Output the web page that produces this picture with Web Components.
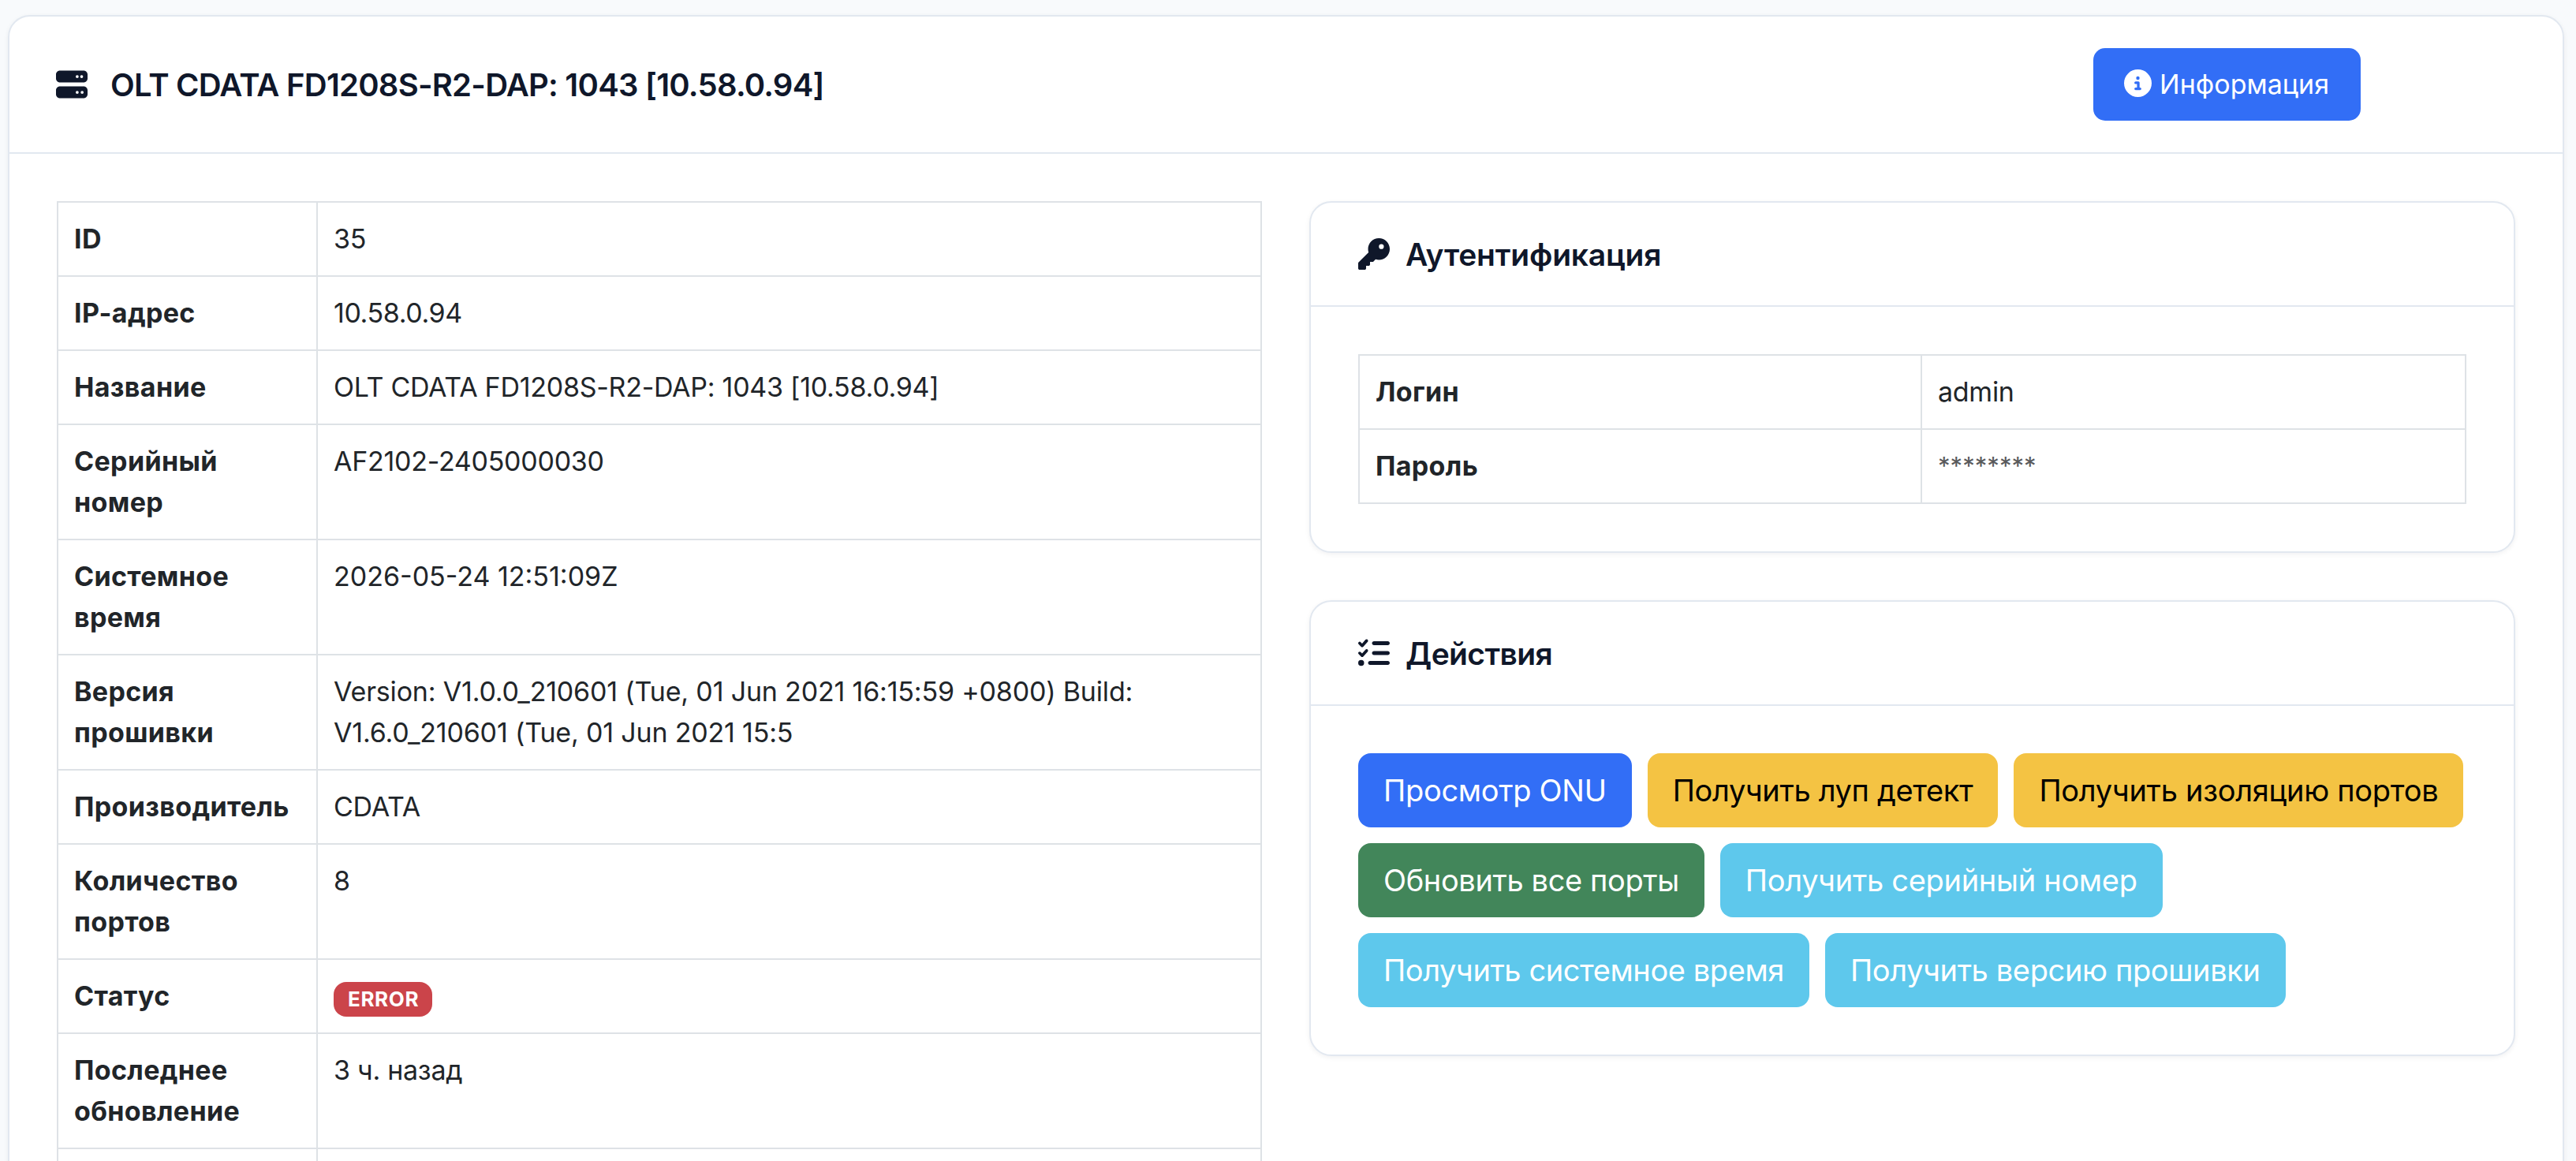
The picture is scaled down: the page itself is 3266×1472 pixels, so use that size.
<!DOCTYPE html>
<html lang="ru">
<head>
    <meta charset="utf-8">
    <title>OLT CDATA FD1208S-R2-DAP: 1043 [10.58.0.94]</title>
    <style>
        html, body {
            height: 1472px;
            overflow: hidden;
        }

        body {
            margin: 0;
            padding: 19px 15px 0 10px;
            box-sizing: border-box;
            background: #f8fafc;
            color: #212529;
            font: 400 34px/52px Inter, "Noto Sans", sans-serif;
        }

        .columns {
            display: grid;
            grid-template-columns: 1528px 1529px;
            gap: 60px;
            align-items: start;
        }

        .side {
            display: flex;
            flex-direction: column;
            gap: 60px;
        }

        .actions {
            display: flex;
            flex-wrap: wrap;
            gap: 20px;
        }
    </style>
</head>
<body>
    <panel-card class="page" icon="server" heading="OLT CDATA FD1208S-R2-DAP: 1043 [10.58.0.94]" size="large">
        <action-button slot="tools" kind="primary" icon="info">Информация</action-button>

        <div class="columns">
            <detail-table style="--label-width: 329px">
                <detail-row label="ID">35</detail-row>
                <detail-row label="IP-адрес" style="letter-spacing: -.4px">10.58.0.94</detail-row>
                <detail-row label="Название">OLT CDATA FD1208S-R2-DAP: 1043 [10.58.0.94]</detail-row>
                <detail-row label="Серийный номер">AF2102-2405000030</detail-row>
                <detail-row label="Системное время" style="letter-spacing: 0">2026-05-24 12:51:09Z</detail-row>
                <detail-row label="Версия прошивки" style="letter-spacing: -.18px">Version: V1.0.0_210601 (Tue, 01 Jun 2021 16:15:59 +0800) Build: V1.6.0_210601 (Tue, 01 Jun 2021 15:5</detail-row>
                <detail-row label="Производитель">CDATA</detail-row>
                <detail-row label="Количество портов">8</detail-row>
                <detail-row label="Статус"><status-badge>ERROR</status-badge></detail-row>
                <detail-row label="Последнее обновление">3 ч. назад</detail-row>
                <detail-row label=""></detail-row>
            </detail-table>

            <div class="side">
                <panel-card icon="key" heading="Аутентификация">
                    <detail-table style="--label-width: 713px">
                        <detail-row label="Логин">admin</detail-row>
                        <detail-row label="Пароль"><masked-text>********</masked-text></detail-row>
                    </detail-table>
                </panel-card>

                <panel-card icon="tasks" heading="Действия" style="--heading-spacing: -.6px">
                    <div class="actions">
                        <action-button kind="primary" size="large" style="letter-spacing: -.3px">Просмотр ONU</action-button>
                        <action-button kind="warning" size="large" style="letter-spacing: -.35px">Получить луп детект</action-button>
                        <action-button kind="warning" size="large" style="letter-spacing: -.28px">Получить изоляцию портов</action-button>
                        <action-button kind="success" size="large" style="letter-spacing: -.38px">Обновить все порты</action-button>
                        <action-button kind="info" size="large" style="letter-spacing: -.3px">Получить серийный номер</action-button>
                        <action-button kind="info" size="large" style="letter-spacing: -.41px">Получить системное время</action-button>
                        <action-button kind="info" size="large" style="letter-spacing: -.37px">Получить версию прошивки</action-button>
                    </div>
                </panel-card>
            </div>
        </div>
    </panel-card>

    <script>
        const icons = {
            server: 'M64 32C28.7 32 0 60.7 0 96v64c0 35.3 28.7 64 64 64H448c35.3 0 64-28.7 64-64V96c0-35.3-28.7-64-64-64H64zm280 72a24 24 0 1 1 0 48 24 24 0 1 1 0-48zm48 24a24 24 0 1 1 48 0 24 24 0 1 1-48 0zM64 288c-35.3 0-64 28.7-64 64v64c0 35.3 28.7 64 64 64H448c35.3 0 64-28.7 64-64V352c0-35.3-28.7-64-64-64H64zm280 72a24 24 0 1 1 0 48 24 24 0 1 1 0-48zm56 24a24 24 0 1 1 48 0 24 24 0 1 1-48 0z',
            key: 'M336 352c97.2 0 176-78.8 176-176S433.2 0 336 0S160 78.8 160 176c0 18.7 2.9 36.8 8.3 53.7L7 391c-4.5 4.5-7 10.6-7 17v80c0 13.3 10.7 24 24 24h80c13.3 0 24-10.7 24-24V448h40c13.3 0 24-10.7 24-24V384h40c6.4 0 12.5-2.5 17-7l33.3-33.3c16.9 5.4 35 8.3 53.7 8.3zM376 96a40 40 0 1 1 0 80 40 40 0 1 1 0-80z',
            tasks: 'M152.1 38.2c9.9 8.9 10.7 24 1.8 33.9l-72 80c-4.4 4.9-10.6 7.8-17.2 7.9s-12.9-2.4-17.6-7L7 113C-2.3 103.6-2.3 88.4 7 79s24.6-9.4 33.9 0l22.1 22.1 55.1-61.2c8.9-9.9 24-10.7 33.9-1.8zm0 160c9.9 8.9 10.7 24 1.8 33.9l-72 80c-4.4 4.9-10.6 7.8-17.2 7.9s-12.9-2.4-17.6-7L7 273c-9.4-9.4-9.4-24.6 0-33.9s24.6-9.4 33.9 0l22.1 22.1 55.1-61.2c8.9-9.9 24-10.7 33.9-1.8zM224 96c0-17.7 14.3-32 32-32H480c17.7 0 32 14.3 32 32s-14.3 32-32 32H256c-17.7 0-32-14.3-32-32zm0 160c0-17.7 14.3-32 32-32H480c17.7 0 32 14.3 32 32s-14.3 32-32 32H256c-17.7 0-32-14.3-32-32zM160 416c0-17.7 14.3-32 32-32H480c17.7 0 32 14.3 32 32s-14.3 32-32 32H192c-17.7 0-32-14.3-32-32zM48 368a48 48 0 1 1 0 96 48 48 0 1 1 0-96z',
            info: 'M256 512A256 256 0 1 0 256 0a256 256 0 1 0 0 512zM216 336h24V272H216c-13.3 0-24-10.7-24-24s10.7-24 24-24h48c13.3 0 24 10.7 24 24v88h8c13.3 0 24 10.7 24 24s-10.7 24-24 24H216c-13.3 0-24-10.7-24-24s10.7-24 24-24zm40-208a32 32 0 1 1 0 64 32 32 0 1 1 0-64z'
        };

        class BaseElement extends HTMLElement {
            connectedCallback() {
                if (!this.shadowRoot) {
                    this.attachShadow({mode: 'open'}).innerHTML = this.template;
                }
            }
        }

        class SolidIcon extends BaseElement {
            get template() {
                return `
                    <style>
                        :host {
                            display: block;
                            flex: none;
                            width: 40px;
                            height: 40px;
                        }

                        svg {
                            display: block;
                            width: 100%;
                            height: 100%;
                            fill: currentColor;
                        }
                    </style>

                    <svg viewBox="0 0 512 512"><path d="${icons[this.getAttribute('name')]}"/></svg>
                `;
            }
        }

        class PanelCard extends BaseElement {
            get template() {
                return `
                    <style>
                        :host {
                            display: block;
                            border: 2px solid #e2e8f0;
                            border-radius: 28px;
                            background: #fff;
                            box-shadow: 0 2px 6px rgba(15, 23, 42, .06);
                        }

                        header {
                            display: flex;
                            align-items: center;
                            justify-content: space-between;
                            height: 130px;
                            padding: 0 60px;
                            border-bottom: 2px solid #e2e8f0;
                            color: #0f172a;
                        }

                        h2 {
                            display: flex;
                            align-items: center;
                            gap: 20px;
                            margin: 0;
                            font-size: 39px;
                            font-weight: 600;
                            letter-spacing: var(--heading-spacing, -.2px);
                        }

                        h2 span {
                            padding-top: 1px;
                        }

                        .body {
                            padding: 60px;
                        }

                        :host([size="large"]) header {
                            height: 172px;
                            padding: 0 256px 0 59px;
                        }

                        :host([size="large"]) h2 {
                            gap: 29px;
                            font-size: 40px;
                            letter-spacing: -.76px;
                        }
                    </style>

                    <header>
                        <h2><solid-icon name="${this.getAttribute('icon')}"></solid-icon><span>${this.getAttribute('heading')}</span></h2>
                        <slot name="tools"></slot>
                    </header>
                    <div class="body"><slot></slot></div>
                `;
            }
        }

        class DetailTable extends BaseElement {
            get template() {
                return `
                    <style>
                        :host {
                            display: block;
                            border: 2px solid #dee2e6;
                            border-bottom: 0;
                        }
                    </style>

                    <slot></slot>
                `;
            }
        }

        class DetailRow extends BaseElement {
            get template() {
                return `
                    <style>
                        :host {
                            display: grid;
                            grid-template-columns: var(--label-width) 1fr;
                            border-bottom: 2px solid #dee2e6;
                            letter-spacing: -.27px;
                        }

                        div {
                            min-height: 52px;
                            padding: 20px;
                        }

                        .label {
                            border-right: 2px solid #dee2e6;
                            font-weight: 700;
                            letter-spacing: .35px;
                        }
                    </style>

                    <div class="label">${this.getAttribute('label')}</div>
                    <div><slot></slot></div>
                `;
            }
        }

        class StatusBadge extends BaseElement {
            get template() {
                return `
                    <style>
                        :host {
                            display: block;
                            width: fit-content;
                            margin-top: 8px;
                            padding: 0 17px 0 18px;
                            border-radius: 16px;
                            background: #cb444a;
                            color: #fff;
                            font-size: 26px;
                            font-weight: 700;
                            line-height: 44px;
                            letter-spacing: .6px;
                        }
                    </style>

                    <slot></slot>
                `;
            }
        }

        class MaskedText extends BaseElement {
            get template() {
                return `
                    <style>
                        :host {
                            display: block;
                            color: #58595b;
                            font-size: 31px;
                            letter-spacing: .05px;
                        }
                    </style>

                    <slot></slot>
                `;
            }
        }

        class ActionButton extends BaseElement {
            get template() {
                const colors = {
                    primary: ['#326ef6', '#fff'],
                    warning: ['#f4c343', '#000'],
                    success: ['#42865a', '#fff'],
                    info: ['#5ec8ec', '#fff']
                };
                const [background, color] = colors[this.getAttribute('kind')];
                const icon = this.getAttribute('icon');

                return `
                    <style>
                        :host {
                            display: block;
                        }

                        button {
                            display: flex;
                            align-items: center;
                            gap: 10px;
                            height: 92px;
                            padding: 0 40px 0 39px;
                            border: 0;
                            border-radius: 15px;
                            background: ${background};
                            color: ${color};
                            font: inherit;
                            letter-spacing: inherit;
                            white-space: nowrap;
                        }

                        :host([size="large"]) button {
                            height: 94px;
                            padding: 0 32px;
                            border-radius: 16px;
                            font-size: 38px;
                        }

                        solid-icon {
                            width: 35px;
                            height: 35px;
                            margin-bottom: 3px;
                        }
                    </style>

                    <button type="button">${icon ? `<solid-icon name="${icon}"></solid-icon>` : ''}<span><slot></slot></span></button>
                `;
            }
        }

        customElements.define('solid-icon', SolidIcon);
        customElements.define('panel-card', PanelCard);
        customElements.define('detail-table', DetailTable);
        customElements.define('detail-row', DetailRow);
        customElements.define('status-badge', StatusBadge);
        customElements.define('masked-text', MaskedText);
        customElements.define('action-button', ActionButton);
    </script>
</body>
</html>
